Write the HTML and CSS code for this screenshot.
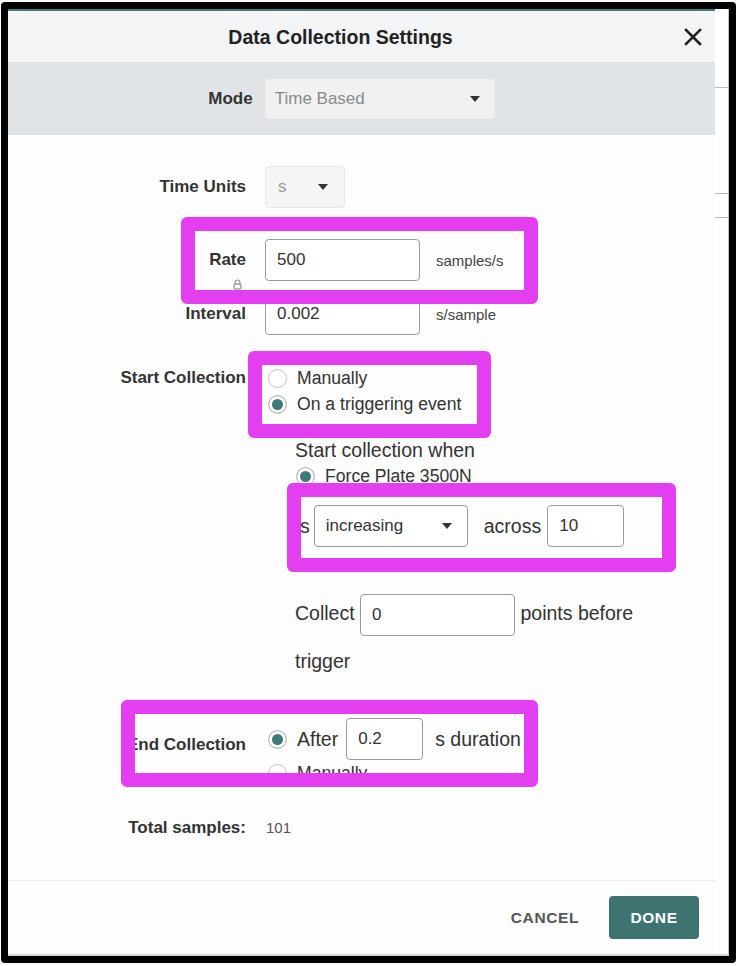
FILE: index.html
```html
<!DOCTYPE html>
<html lang="en">
<head>
  <meta charset="UTF-8" />
  <title>Data Collection Settings</title>
  <link rel="stylesheet" href="styles.css">
</head>
<body>
  <div class="frame">
    <div class="dialog">
      <div class="accent"></div>
      <header class="dialog-head">
        <h1 class="dialog-title">Data Collection Settings</h1>
        <button class="close-btn" aria-label="Close">
          <svg width="18" height="18" viewBox="0 0 18 18"><path d="M2 2L16 16M16 2L2 16" stroke="#222" stroke-width="2.6" stroke-linecap="square"/></svg>
        </button>
      </header>

      <div class="mode-bar">
        <span class="mode-label">Mode</span>
        <div class="select select-mode">
          <span>Time Based</span>
          <svg class="caret" width="10" height="6" viewBox="0 0 10 6"><path d="M0 0h10L5 6z"/></svg>
        </div>
      </div>

      <div class="dialog-body">
        <div class="row row-units">
          <span class="field-label">Time Units</span>
          <div class="select select-units">
            <span>s</span>
            <svg class="caret" width="10" height="6" viewBox="0 0 10 6"><path d="M0 0h10L5 6z"/></svg>
          </div>
        </div>

        <div class="row row-rate">
          <span class="field-label">Rate
            <svg class="lock-icon" width="9" height="11" viewBox="0 0 9 11"><path d="M2 5V3.5a2.5 2.5 0 0 1 5 0V5" fill="none" stroke="#777"/><rect x="1" y="5" width="7" height="5" rx="1" fill="none" stroke="#777"/></svg>
          </span>
          <div class="field">
            <input class="text-input input-wide" type="text" value="500">
            <span class="unit">samples/s</span>
          </div>
        </div>

        <div class="row row-interval">
          <span class="field-label">Interval</span>
          <div class="field">
            <input class="text-input input-wide" type="text" value="0.002">
            <span class="unit">s/sample</span>
          </div>
        </div>

        <div class="row row-start">
          <span class="field-label">Start Collection</span>
          <div class="start-options">
            <div class="radio-row"><span class="radio"></span>Manually</div>
            <div class="radio-row"><span class="radio on"></span>On a triggering event</div>

            <div class="trigger-box">
              <div class="trigger-title">Start collection when</div>
              <div class="radio-row sensor-row"><span class="radio on"></span>Force Plate 3500N</div>
              <div class="trigger-row">
                <span>s</span>
                <div class="select select-dir">
                  <span>increasing</span>
                  <svg class="caret" width="10" height="6" viewBox="0 0 10 6"><path d="M0 0h10L5 6z"/></svg>
                </div>
                <span class="across">across</span>
                <input class="text-input input-small" type="text" value="10">
              </div>
              <p class="pre-trigger">Collect <input class="text-input input-wide" type="text" value="0"> points before trigger</p>
            </div>
          </div>
        </div>

        <div class="row row-end">
          <span class="field-label">End Collection</span>
          <div class="end-options">
            <div class="after-row">
              <span class="radio on"></span>
              <span>After</span>
              <input class="text-input input-small" type="text" value="0.2">
              <span>s duration</span>
            </div>
            <div class="radio-row"><span class="radio"></span>Manually</div>
          </div>
        </div>

        <div class="row row-total">
          <span class="field-label">Total samples:</span>
          <span class="total-value">101</span>
        </div>
      </div>

      <footer class="dialog-foot">
        <button class="btn-text">CANCEL</button>
        <button class="btn-primary">DONE</button>
      </footer>

      <!-- highlight marks drawn over the dialog -->
      <div class="mark mark-rate"></div>
      <div class="mark mark-start"></div>
      <div class="mark mark-trigger"></div>
      <div class="mark mark-end"></div>
    </div>

    <div class="edge">
      <div class="edge-line line-1"></div>
      <div class="edge-line line-2"></div>
      <div class="edge-line line-3"></div>
    </div>
  </div>
</body>
</html>
```

FILE: styles.css
```css
* {
  box-sizing: border-box;
}

body {
  margin: 0;
  background: #fff;
  font-family: 'Liberation Sans', Arial, sans-serif;
  color: #333;
}

.frame {
  display: flex;
  width: 735px;
  height: 961px;
  margin: 2px 0 0 1px;
  border: 7px solid #000;
  border-radius: 4px;
  background: #fff;
}

.dialog {
  position: relative;
  width: 707px;
  display: flex;
  flex-direction: column;
  background: #fdfdfd;
  border-bottom: 2px solid #d6d6d6;
}

.accent {
  height: 2px;
  background: #3f7b79;
}

.dialog-head {
  height: 51px;
  display: flex;
  align-items: center;
  background: #f3f4f6;
}

.dialog-title {
  flex: 1;
  margin: 2px 0 0;
  text-align: center;
  font-size: 19.5px;
  font-weight: bold;
  color: #222;
}

.close-btn {
  width: 40px;
  height: 40px;
  padding: 0;
  margin-right: 2px;
  border: none;
  background: none;
  display: flex;
  align-items: center;
  justify-content: center;
}

.mode-bar {
  height: 73px;
  display: flex;
  align-items: center;
  justify-content: center;
  gap: 12px;
  padding-right: 20px;
  background: #e1e4e7;
}

.mode-label,
.field-label {
  font-size: 17px;
  font-weight: bold;
  color: #333;
}

.select {
  display: flex;
  align-items: center;
  justify-content: space-between;
  height: 42px;
  border-radius: 4px;
  font-size: 17px;
}

.caret path {
  fill: #333;
}

.select-mode {
  width: 230px;
  height: 40px;
  padding: 0 15px 0 10px;
  background: #f1f1f1;
  color: #8a8a8a;
}

.select-units {
  width: 80px;
  padding: 0 16px 0 12px;
  background: #f5f5f5;
  border: 1px solid #e6e6e6;
  color: #999;
}

.select-dir {
  width: 154px;
  padding: 0 15px 0 11px;
  background: #fff;
  border: 1px solid #999;
  color: #333;
}

.dialog-body {
  flex: 1;
  padding-top: 31px;
}

.row {
  display: grid;
  grid-template-columns: 238px auto;
  column-gap: 19px;
  align-items: center;
}

.field-label {
  position: relative;
  text-align: right;
  line-height: 20px;
}

.lock-icon {
  position: absolute;
  right: 4px;
  top: 29px;
}

.row-rate {
  margin-top: 31px;
}

.row-interval {
  margin-top: 12px;
}

.field {
  display: flex;
  align-items: center;
  gap: 16px;
}

.text-input {
  height: 42px;
  padding: 0 11px;
  border: 1px solid #9a9a9a;
  border-radius: 4px;
  background: #fff;
  font: inherit;
  font-size: 17px;
  color: #333;
  outline: none;
}

.input-wide {
  width: 155px;
}

.input-small {
  width: 77px;
}

.unit {
  font-size: 15px;
  color: #444;
}

.row-start {
  margin-top: 30px;
  align-items: start;
}

.row-start .field-label {
  line-height: 26px;
}

.radio-row {
  display: flex;
  align-items: center;
  gap: 10px;
  height: 26px;
  font-size: 17.6px;
  color: #333;
}

.radio {
  flex: none;
  width: 19px;
  height: 19px;
  margin-left: 3px;
  border: 1px solid #c4c4c4;
  border-radius: 50%;
  background: #fff;
}

.radio.on {
  background: #3d7a77;
  box-shadow: inset 0 0 0 3px #fff;
}

.trigger-box {
  width: 400px;
  padding-left: 30px;
  margin-top: 20px;
  font-size: 19.5px;
}

.trigger-title {
  line-height: 26px;
}

.sensor-row .radio {
  margin-left: 1px;
}

.trigger-row {
  display: flex;
  align-items: center;
  margin-top: 16px;
  padding-left: 5px;
}

.trigger-row .select-dir {
  margin-left: 4px;
}

.across {
  margin: 0 6px 0 16px;
}

.pre-trigger {
  margin: 42px 0 0;
  line-height: 48px;
}

.pre-trigger .text-input {
  vertical-align: middle;
}

.row-end {
  margin-top: 33px;
  align-items: start;
}

.row-end .field-label {
  padding-top: 17px;
}

.after-row {
  display: flex;
  align-items: center;
  height: 42px;
  font-size: 19.5px;
}

.after-row .text-input {
  margin: 0 12px 0 8px;
}

.after-row .radio {
  margin-right: 10px;
}

.row-total {
  margin-top: 32px;
  line-height: 20px;
}

.total-value {
  font-size: 15px;
  color: #555;
  margin-left: 1px;
}

.dialog-foot {
  height: 74px;
  display: flex;
  align-items: center;
  justify-content: flex-end;
  padding-right: 16px;
  border-top: 1px solid #ececec;
}

.btn-text {
  margin-right: 30px;
  padding: 0;
  border: none;
  background: none;
  font: inherit;
  font-size: 15.5px;
  font-weight: bold;
  letter-spacing: 0.6px;
  color: #555;
}

.btn-primary {
  width: 90px;
  height: 43px;
  border: none;
  border-radius: 4px;
  background: #3d7472;
  font: inherit;
  font-size: 15.5px;
  font-weight: bold;
  letter-spacing: 0.6px;
  color: #fff;
}

.mark {
  position: absolute;
  border: 14px solid #e33ef0;
  border-radius: 6px;
}

.mark-rate {
  left: 173px;
  top: 208px;
  width: 357px;
  height: 87px;
}

.mark-start {
  left: 240px;
  top: 342px;
  width: 243px;
  height: 87px;
}

.mark-trigger {
  left: 279px;
  top: 474px;
  width: 389px;
  height: 89px;
}

.mark-end {
  left: 113px;
  top: 691px;
  width: 417px;
  height: 87px;
}

.edge {
  flex: 1;
  border-right: 1px solid #c4c4c4;
  border-bottom: 2px solid #d6d6d6;
}

.edge-line {
  height: 1px;
  background: #bbb;
}

.line-1 {
  margin-top: 78px;
}

.line-2 {
  margin-top: 105px;
}

.line-3 {
  margin-top: 23px;
}
```
